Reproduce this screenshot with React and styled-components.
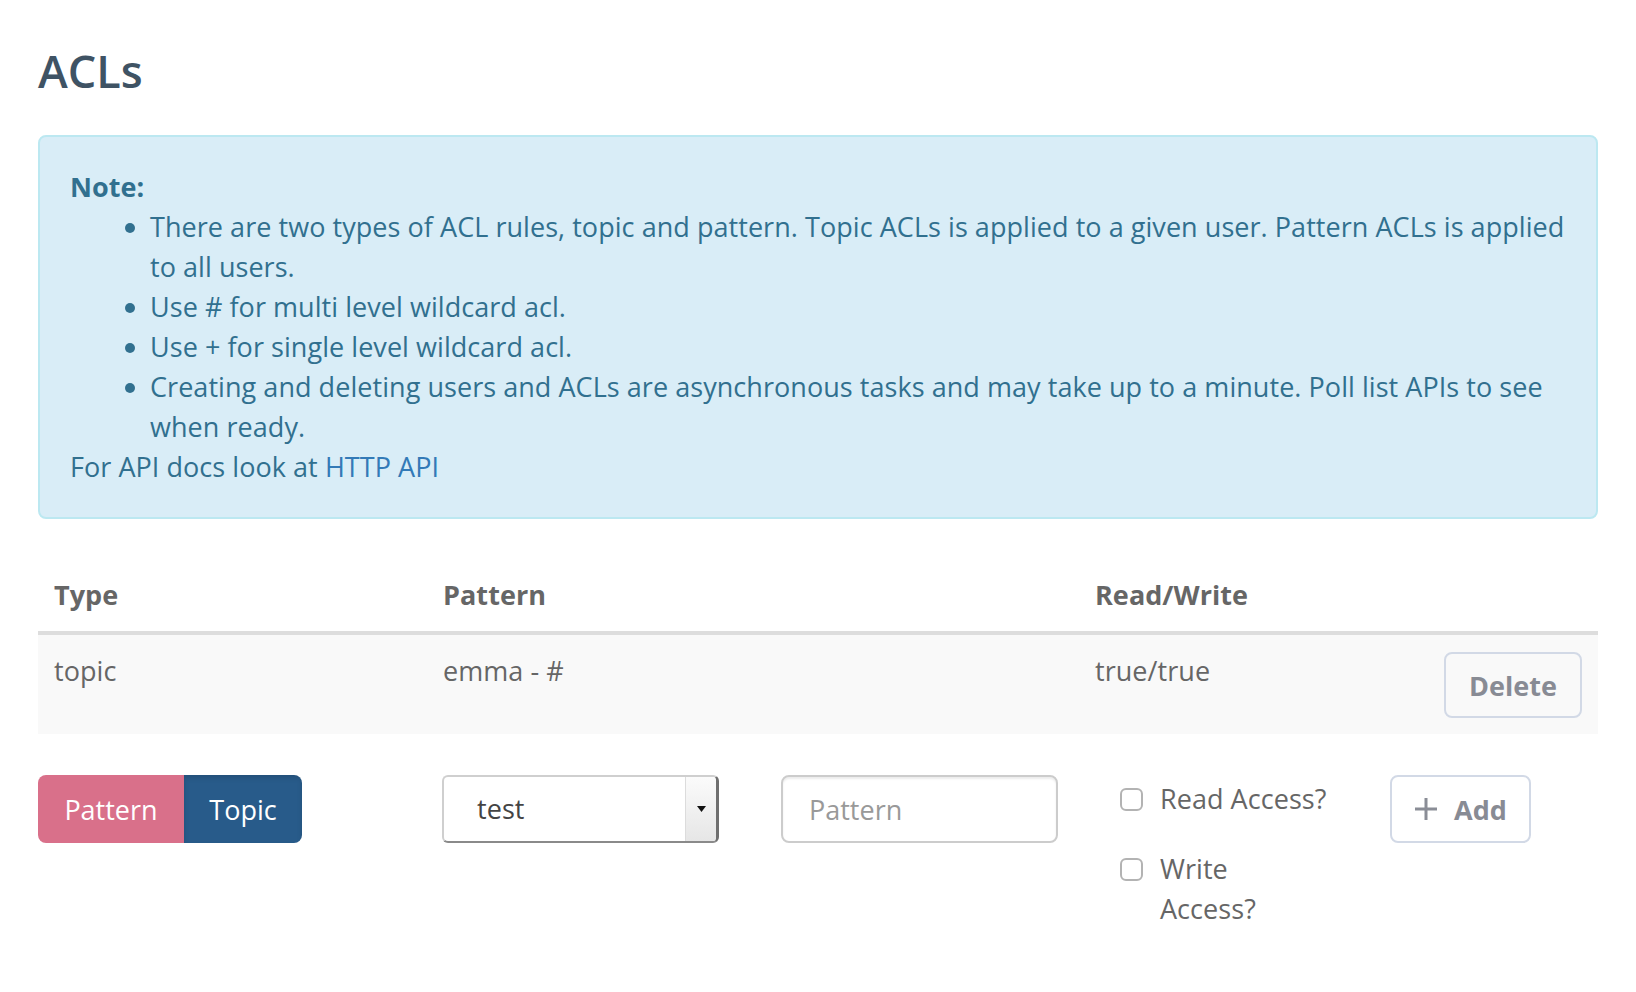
import React from 'react';
import styled, { createGlobalStyle } from 'styled-components';

const GlobalStyle = createGlobalStyle`
    html, body {
        margin: 0;
        padding: 0;
        background: #fff;
    }
    body {
        font-family: "Open Sans", "Noto Sans", sans-serif;
        font-size: 27px;
        line-height: 40px;
        letter-spacing: 0.05px;
        color: #666;
    }
`;

const rules = [
    { type: 'topic', pattern: 'emma - #', rw: 'true/true' },
];

function App() {
    return (
        <Page>
            <GlobalStyle />
            <Title>ACLs</Title>
            <Alert>
                <NoteLabel>Note:</NoteLabel>
                <NoteList>
                    <li>There are two types of ACL rules, topic and pattern. Topic ACLs is applied to a given user. Pattern ACLs is applied to all users.</li>
                    <li>Use # for multi level wildcard acl.</li>
                    <li>Use + for single level wildcard acl.</li>
                    <li>Creating and deleting users and ACLs are asynchronous tasks and may take up to a minute. Poll list APIs to see when ready.</li>
                </NoteList>
                For API docs look at <AlertLink href="#">HTTP API</AlertLink>
            </Alert>

            <Table>
                <thead>
                    <tr>
                        <Th w="389px">Type</Th>
                        <Th w="652px">Pattern</Th>
                        <Th w="349px">Read/Write</Th>
                        <Th />
                    </tr>
                </thead>
                <tbody>
                    {rules.map((r, i) => (
                        <Row key={i} striped={i % 2 === 0}>
                            <Td>{r.type}</Td>
                            <Td>{r.pattern}</Td>
                            <Td>{r.rw}</Td>
                            <Td align="right">
                                <OutlineButton>Delete</OutlineButton>
                            </Td>
                        </Row>
                    ))}
                </tbody>
            </Table>

            <FormRow>
                <ToggleGroup>
                    <ToggleButton color="#d9708a" w="146px">Pattern</ToggleButton>
                    <ToggleButton color="#285b8a" w="118px" active>Topic</ToggleButton>
                </ToggleGroup>

                <Select>
                    <SelectValue>test</SelectValue>
                    <SelectArrow>
                        <svg width="9" height="6" viewBox="0 0 9 6">
                            <path d="M0 0h9L4.5 6z" fill="#111" />
                        </svg>
                    </SelectArrow>
                </Select>

                <TextInput placeholder="Pattern" />

                <Checks>
                    <CheckLabel>
                        <CheckBox type="checkbox" />
                        <span>Read Access?</span>
                    </CheckLabel>
                    <CheckLabel>
                        <CheckBox type="checkbox" />
                        <span>Write Access?</span>
                    </CheckLabel>
                </Checks>

                <div>
                    <OutlineButton tall>
                        <svg width="24" height="24" viewBox="0 0 24 24">
                            <path d="M12 1v22M1 12h22" stroke="#8a8d96" strokeWidth="3" />
                        </svg>
                        Add
                    </OutlineButton>
                </div>
            </FormRow>
        </Page>
    );
}

/* ----------------- Styles ----------------- */
const Page = styled.div`
    padding: 0 38px 40px 38px;
`;

const Title = styled.h2`
    margin: 0 0 39px;
    padding-top: 46px;
    font-size: 45px;
    line-height: 50px;
    font-weight: 600;
    letter-spacing: 0;
    color: #3f5364;
`;

const Alert = styled.div`
    background: #d9edf7;
    border: 2px solid #bce8f1;
    border-radius: 8px;
    padding: 30px 30px;
    color: #31708f;
    margin-bottom: 40px;
`;

const NoteLabel = styled.div`
    font-weight: 700;
`;

const NoteList = styled.ul`
    margin: 0;
    padding-left: 80px;
    list-style: none;
    li {
        position: relative;
    }
    li::before {
        content: '';
        position: absolute;
        left: -25px;
        top: 16px;
        width: 10px;
        height: 10px;
        border-radius: 50%;
        background: currentColor;
    }
`;

const AlertLink = styled.a`
    color: #337ab7;
    text-decoration: none;
`;

const Table = styled.table`
    width: 100%;
    table-layout: fixed;
    border-collapse: collapse;
    border-spacing: 0;
`;

const Th = styled.th`
    box-sizing: border-box;
    width: ${p => p.w || 'auto'};
    text-align: left;
    font-weight: 700;
    color: #666;
    padding: 16px;
    border-bottom: 4px solid #ddd;
`;

const Row = styled.tr`
    background: ${p => (p.striped ? '#f9f9f9' : 'transparent')};
`;

const Td = styled.td`
    padding: 16px;
    vertical-align: top;
    text-align: ${p => p.align || 'left'};
    color: #666;
`;

const OutlineButton = styled.button`
    display: inline-flex;
    align-items: center;
    justify-content: center;
    gap: 16px;
    box-sizing: border-box;
    width: ${p => (p.tall ? '141px' : '138px')};
    height: ${p => (p.tall ? '68px' : '66px')};
    margin-top: ${p => (p.tall ? '0' : '1px')};
    padding: 0;
    background: transparent;
    border: 2px solid #d2d9e6;
    border-radius: 8px;
    font-family: inherit;
    font-size: 27px;
    font-weight: 700;
    color: #888b94;
`;

const FormRow = styled.div`
    display: grid;
    grid-template-columns: 404px 339px 339px 270px 1fr;
    align-items: start;
    margin-top: 41px;
`;

const ToggleGroup = styled.div`
    display: flex;
    width: 264px;
    height: 68px;
    border-radius: 8px;
    overflow: hidden;
`;

const ToggleButton = styled.button`
    flex: 0 0 ${p => p.w};
    padding: 0;
    border: none;
    background: ${p => p.color};
    color: #fff;
    font-family: inherit;
    font-size: 27px;
    font-weight: 500;
    box-shadow: ${p => (p.active ? 'inset 0 3px 5px rgba(0,0,0,0.125)' : 'none')};
`;

const Select = styled.div`
    display: flex;
    width: 277px;
    height: 68px;
    box-sizing: border-box;
    border: 2px solid #cfcfcf;
    border-right: 3px solid #6f6f6f;
    border-bottom-color: #8a8a8a;
    border-radius: 6px;
    background: #fff;
    overflow: hidden;
`;

const SelectValue = styled.div`
    flex: 1;
    display: flex;
    align-items: center;
    padding-left: 33px;
    color: #444;
`;

const SelectArrow = styled.div`
    width: 30px;
    display: flex;
    align-items: center;
    justify-content: center;
    background: linear-gradient(#fbfbfb, #e6e6e6);
    border-left: 1px solid #dcdcdc;
`;

const TextInput = styled.input`
    width: 277px;
    height: 68px;
    box-sizing: border-box;
    border: 2px solid #ccc;
    border-radius: 8px;
    padding: 0 26px;
    font-family: inherit;
    font-size: 27px;
    color: #555;
    box-shadow: inset 0 2px 2px rgba(0, 0, 0, 0.075);
    outline: none;
    &::placeholder {
        color: #999;
    }
`;

const Checks = styled.div`
    display: flex;
    flex-direction: column;
    gap: 30px;
    padding-top: 4px;
`;

const CheckLabel = styled.label`
    display: flex;
    align-items: flex-start;
    gap: 17px;
    color: #666;
    span {
        max-width: 168px;
    }
`;

const CheckBox = styled.input`
    appearance: none;
    margin: 9px 0 0;
    width: 23px;
    height: 23px;
    flex: 0 0 23px;
    box-sizing: border-box;
    border: 2px solid #b3b3b3;
    border-radius: 6px;
    background: #fff;
`;

export default App;
